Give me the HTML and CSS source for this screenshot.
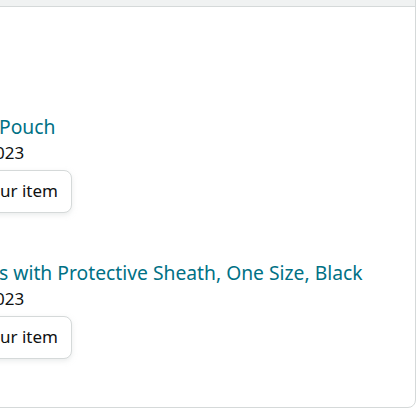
FILE: index.html
```html
<!DOCTYPE html>
<html>
<head>
<meta charset="utf-8">
<link rel="stylesheet" href="styles.css">
</head>
<body>
<div class="card">
  <div class="card-header"></div>
  <div class="card-body">
    <div class="item">
      <a class="title" href="#">Pouch</a>
      <div class="date">023</div>
      <button class="btn">ur item</button>
    </div>
    <div class="item">
      <a class="title" href="#">s with Protective Sheath, One Size, Black</a>
      <div class="date">023</div>
      <button class="btn">ur item</button>
    </div>
  </div>
</div>
</body>
</html>
```

FILE: styles.css
```css
html, body {
  margin: 0;
  padding: 0;
  background: #ffffff;
  overflow: hidden;
}
body {
  width: 420px;
  height: 420px;
  font-family: "Noto Sans", "Liberation Sans", sans-serif;
  color: #0f1111;
}
.card {
  margin-top: -40px;
  margin-left: -200px;
  width: 616px;
  box-sizing: border-box;
  border: 1px solid #d5d9d9;
  border-radius: 8px;
  background: #fff;
}
.card-header {
  height: 45px;
  background: #f0f2f2;
  border-bottom: 1px solid #d5d9d9;
  border-radius: 8px 8px 0 0;
}
.card-body {
  padding: 108px 0 48px 200px;
}
.item {
  display: flex;
  flex-direction: column;
  align-items: flex-start;
}
.item + .item {
  margin-top: 48px;
}
.title {
  color: #007185;
  text-decoration: none;
  font-size: 19.3px;
  font-weight: 400;
  line-height: 24px;
  margin-left: -2px;
}
.date {
  font-size: 17px;
  font-weight: 400;
  line-height: 22px;
  margin-top: 3px;
  margin-left: -6px;
}
.btn {
  margin-top: 6px;
  margin-left: -19px;
  font-family: inherit;
  font-size: 17px;
  font-weight: 400;
  line-height: 22px;
  color: #0f1111;
  background: #fff;
  border: 1px solid #d5d9d9;
  border-radius: 8px;
  padding: 9px 13px 10px 17px;
  box-shadow: 0 2px 5px 0 rgba(213, 217, 217, 0.5);
}
```
